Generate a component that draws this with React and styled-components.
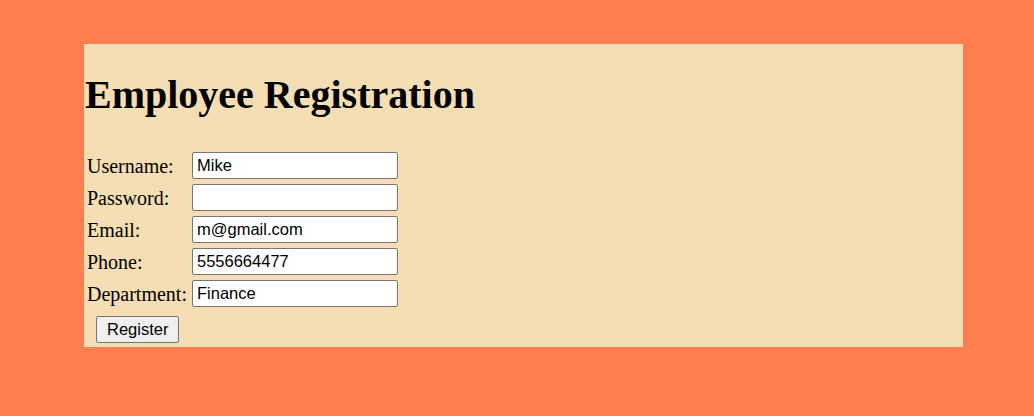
import styled, { createGlobalStyle } from "styled-components";

const Global = createGlobalStyle`
  html, body {
    margin: 0;
    padding: 0;
    background: #ff7f50;
    font-family: "Liberation Serif", "Times New Roman", serif;
  }
`;

const Page = styled.div`
  padding: 44px 71px 0 84px;
`;

const Panel = styled.div`
  background: #f5deb3;
  height: 303px;
  padding-top: 1px;
  box-sizing: border-box;
`;

const Title = styled.h1`
  font-size: 40px;
  font-weight: bold;
  margin: 26px 0 31px 1px;
`;

const Form = styled.table`
  border-spacing: 2px;
`;

const Label = styled.td`
  padding: 1px 3px 1px 1px;
  font-size: 20px;
  color: #000;
`;

const Cell = styled.td`
  padding: 1px 1px 2px 0;
`;

const Field = styled.input`
  display: block;
  box-sizing: border-box;
  width: 206px;
  height: 27px;
  border: 1px solid #767676;
  border-radius: 2px;
  padding: 1px 4px;
  font-family: "Liberation Sans", Arial, sans-serif;
  font-size: 16.5px;
  background: #fff;
  color: #000;
`;

const Button = styled.button`
  margin: 4px 0 0 10px;
  height: 27px;
  padding: 1px 10px;
  font-family: "Liberation Sans", Arial, sans-serif;
  font-size: 16.5px;
  background: #efefef;
  border: 1px solid #767676;
  border-radius: 2px;
  color: #000;
`;

const rows = [
  ["Username:", "text", "Mike"],
  ["Password:", "password", ""],
  ["Email:", "email", "m@gmail.com"],
  ["Phone:", "tel", "5556664477"],
  ["Department:", "text", "Finance"],
];

export default function App() {
  return (
    <>
      <Global />
      <Page>
        <Panel>
          <Title>Employee Registration</Title>
          <Form>
            <tbody>
              {rows.map(([label, type, value]) => (
                <tr key={label}>
                  <Label>{label}</Label>
                  <Cell>
                    <Field type={type} defaultValue={value} />
                  </Cell>
                </tr>
              ))}
              <tr>
                <Cell colSpan={2}>
                  <Button>Register</Button>
                </Cell>
              </tr>
            </tbody>
          </Form>
        </Panel>
      </Page>
    </>
  );
}
